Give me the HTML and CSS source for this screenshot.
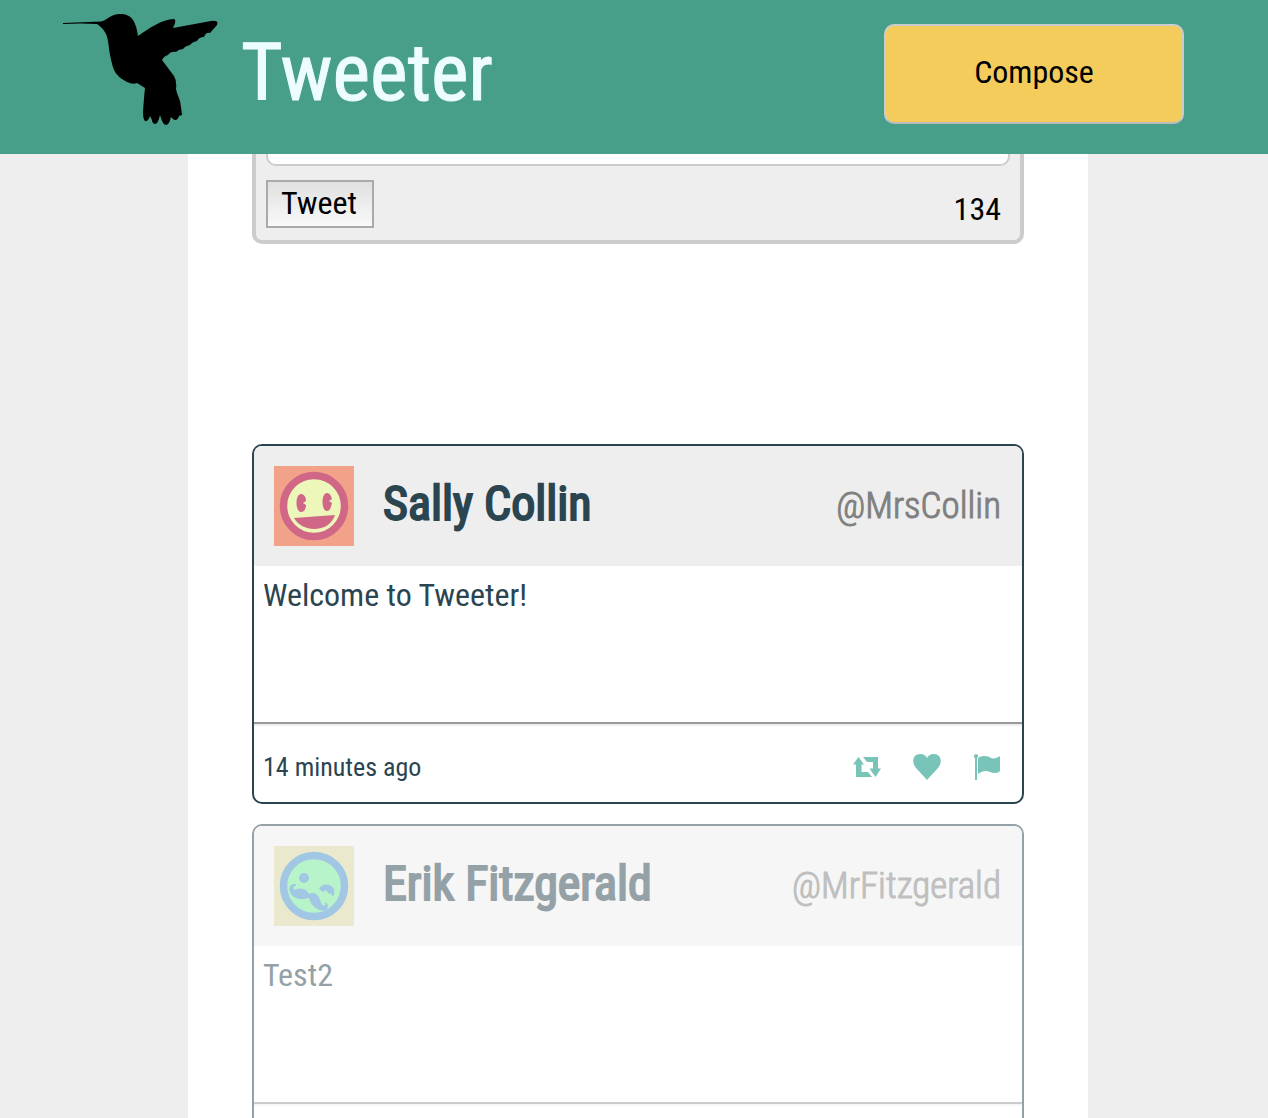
FILE: index.html
```html
<!DOCTYPE html>
<html lang="en">
<head>
<meta charset="utf-8">
<meta name="viewport" content="width=device-width, initial-scale=1">
<title>Tweeter</title>
<link rel="stylesheet" href="styles.css">
</head>
<body>
<svg class="sprite" aria-hidden="true">
  <symbol id="retweet" viewBox="0 0 28 20">
    <path d="M5.500 0 0 7.500H3V20H19L15 15H8.500V7.500H11ZM10 0H25V11.500H28L22.500 20 16.500 11.500H20V5H14Z"/>
  </symbol>
  <symbol id="heart" viewBox="0 0 28 26">
    <path d="M14 26 3 14C-2 8 0 0 7 0c4 0 6 2 7 4 1-2 3-4 7-4 7 0 9 8 4 14Z"/>
  </symbol>
  <symbol id="flag" viewBox="0 0 28 26">
    <path d="M2 4A2 2 0 1 1 4 4V26H2ZM5 4C10 1 15 2 18 4 21 5 24 4 27 2V17C24 20 20 19 17 18 13 16 9 17 5 20Z"/>
  </symbol>
</svg>
<header class="topbar">
  <a class="brand" href="#top">
    <svg class="bird" viewBox="0 0 156 112" aria-hidden="true">
      <path d="M0 9 38 7.500C43 7 46 1 56 0 68-1 73 7 75 22 85 15 99 5 111 5Q114 6 110 14L148 7Q156 6 154 11L147 19Q143 18 141 23 136 23 134 27 129 28 127 31 122 32 120 35 116 35 113 38 108 37 105 41Q101 42 99 46L111 62Q114 67 113 75L114 79Q116 84 117 87L118 93 119 101 116 102Q114 108 110 105L108 103Q106 111 103 111 100 110 99 107L97 101Q95 110 92 110 89 109 89 106L87 102Q85 108 82 107 80 105 80 98 81 83 82 74L74 69Q70 71 64 68 54 63 51 56 48 48 46 35 45 24 43 20 40 14 34 10 18 9 0 10Z"/>
    </svg>
    <h1 class="brand-name">Tweeter</h1>
  </a>
  <button class="compose" type="button">Compose</button>
</header>
<main class="page">
  <div class="column">
    <form class="new-tweet">
      <textarea class="draft" aria-label="Tweet text"></textarea>
      <div class="new-tweet-actions">
        <button class="submit" type="button">Tweet</button>
        <span class="counter">134</span>
      </div>
    </form>
    <section class="feed">
      <article class="tweet">
        <header class="tweet-header">
          <svg class="avatar" viewBox="0 0 80 80" aria-hidden="true">
            <path fill="#f1a288" d="M0 0H80V80H0Z"/>
            <circle cx="40" cy="40" r="30.500" fill="#edf7b9" stroke="#d06786" stroke-width="7.500"/>
            <path fill="#d06786" d="M27 28C30 28 32 31 32 35L29 37 32 39C32 43 30 46 27 46 21 46 21 28 27 28ZM53 27C56 27 57 30 58 33L55 35 58 37C57 41 56 45 53 45 47 45 47 27 53 27ZM20 52 61 49C58 58 50 63 40 63 32 63 24 59 20 52Z"/>
          </svg>
          <h2 class="name">Sally Collin</h2>
          <span class="handle">@MrsCollin</span>
        </header>
        <p class="message">Welcome to Tweeter!</p>
        <footer class="tweet-footer">
          <time class="age">14 minutes ago</time>
          <div class="actions">
            <button class="action" type="button" aria-label="Retweet"><svg class="icon-retweet"><use href="#retweet"/></svg></button>
            <button class="action" type="button" aria-label="Like"><svg class="icon"><use href="#heart"/></svg></button>
            <button class="action" type="button" aria-label="Flag"><svg class="icon"><use href="#flag"/></svg></button>
          </div>
        </footer>
      </article>
      <article class="tweet tweet-faded">
        <header class="tweet-header">
          <svg class="avatar" viewBox="0 0 80 80" aria-hidden="true">
            <path fill="#d7d59e" d="M0 0H80V80H0Z"/>
            <circle cx="40" cy="40" r="30.500" fill="#73eb97" stroke="#4590cc" stroke-width="7.500"/>
            <g fill="#4590cc">
              <circle cx="30" cy="32" r="5"/>
              <path d="M45 43C48 37 57 37 60 43 61 47 60 51 58 50L57 47 55 48 52 44 49 46Z"/>
              <path d="M22 39C17 37 14 42 17 47 20 53 29 54 35 51 37 58 41 63 48 64 53 65 55 60 52 57L51 57C53 60 50 61 48 59 45 56 46 50 41 48 38 47 36 48 35 49 33 43 26 42 22 44 18 45 18 40 22 39Z" stroke="#4590cc" stroke-linejoin="round"/>
            </g>
          </svg>
          <h2 class="name">Erik Fitzgerald</h2>
          <span class="handle">@MrFitzgerald</span>
        </header>
        <p class="message">Test2</p>
        <footer class="tweet-footer"></footer>
      </article>
    </section>
  </div>
</main>
</body>
</html>
```

FILE: styles.css
```css
* { box-sizing: border-box; }

body {
  margin: 0;
  height: 100vh;
  display: flex;
  flex-direction: column;
  overflow: hidden;
  background: #eee;
  color: #000;
  font-family: "Roboto Condensed", "Liberation Sans Narrow", Roboto, sans-serif;
}

button, textarea { font: inherit; color: inherit; }
h1, h2, p { margin: 0; }
.sprite { display: none; }

.topbar {
  flex: none;
  display: flex;
  align-items: center;
  justify-content: space-between;
  padding: 14px 84px 20px 63px;
  background: #479e89;
}

.brand {
  display: flex;
  align-items: flex-start;
  gap: 22px;
  color: #edfcff;
  text-decoration: none;
}

.bird {
  width: 156px;
  height: 112px;
}

.bird path { fill: #000; }

.brand-name {
  padding-bottom: 2px;
  font-size: 80px;
  line-height: 118px;
  font-weight: 400;
  -webkit-text-stroke: 1px;
}

.compose {
  width: 300px;
  height: 100px;
  padding: 0 0 4px;
  border: 2px solid #ccc;
  border-bottom-color: #bbb;
  border-radius: 10px;
  background: #f3cc5c;
  font-size: 32px;
}

.page {
  flex: 1;
  min-height: 0;
  display: flex;
  justify-content: center;
  padding-left: 8px;
  overflow: hidden;
}

.column {
  flex: 0 1 900px;
  height: max-content;
  min-height: 100%;
  padding: 0 64px;
  background: #fff;
}

.new-tweet {
  display: flex;
  flex-direction: column;
  gap: 14px;
  padding: 0 10px 12px;
  border: 4px solid #ccc;
  border-top: 0;
  border-radius: 0 0 10px 10px;
  background: #eee;
}

.draft {
  height: 12px;
  border: 2px solid #ccc;
  border-top: 0;
  border-radius: 0 0 10px 10px;
  background: #fff;
  resize: none;
}

.new-tweet-actions {
  display: flex;
  align-items: center;
  justify-content: space-between;
  padding-right: 9px;
}

.submit {
  width: 108px;
  height: 48px;
  padding: 0 2px 2px 0;
  border: 2px solid #aaa;
  background: linear-gradient(#e0e0e0, #f9f9f9);
  font-size: 32px;
  line-height: 40px;
}

.counter {
  padding-top: 10px;
  font-size: 32px;
  line-height: 38px;
}

.feed {
  display: flex;
  flex-direction: column;
  gap: 20px;
  padding-top: 200px;
}

.tweet {
  border: 2px solid #2b4550;
  border-radius: 10px;
  color: #2b4550;
  overflow: hidden;
}

.tweet-faded { opacity: 0.5; }

.tweet-header {
  display: flex;
  align-items: center;
  padding: 20px 21px 20px 20px;
  background: #eee;
}

.avatar {
  width: 80px;
  height: 80px;
}

.name {
  flex: 1;
  padding: 0 0 4px 29px;
  font-size: 48px;
  line-height: 56px;
  font-weight: 400;
  -webkit-text-stroke: 2px;
}

.handle {
  color: #808080;
  font-size: 37px;
  line-height: 44px;
  font-weight: 300;
  -webkit-text-stroke: 1px;
}

.message {
  min-height: 156px;
  padding: 10px 9px;
  font-size: 32px;
  line-height: 38px;
}

.tweet-footer {
  display: flex;
  align-items: center;
  justify-content: space-between;
  min-height: 80px;
  padding: 8px 21px 0 9px;
  border-top: 2px solid #999;
  box-shadow: inset 0 2px #eee;
}

.age {
  font-size: 26px;
  line-height: 32px;
}

.actions {
  display: flex;
  gap: 32px;
}

.action {
  display: flex;
  align-items: center;
  padding: 0;
  border: 0;
  background: none;
}

.icon, .icon-retweet {
  width: 28px;
  height: 26px;
  fill: #79c4b8;
}

.icon-retweet { height: 20px; }
```
